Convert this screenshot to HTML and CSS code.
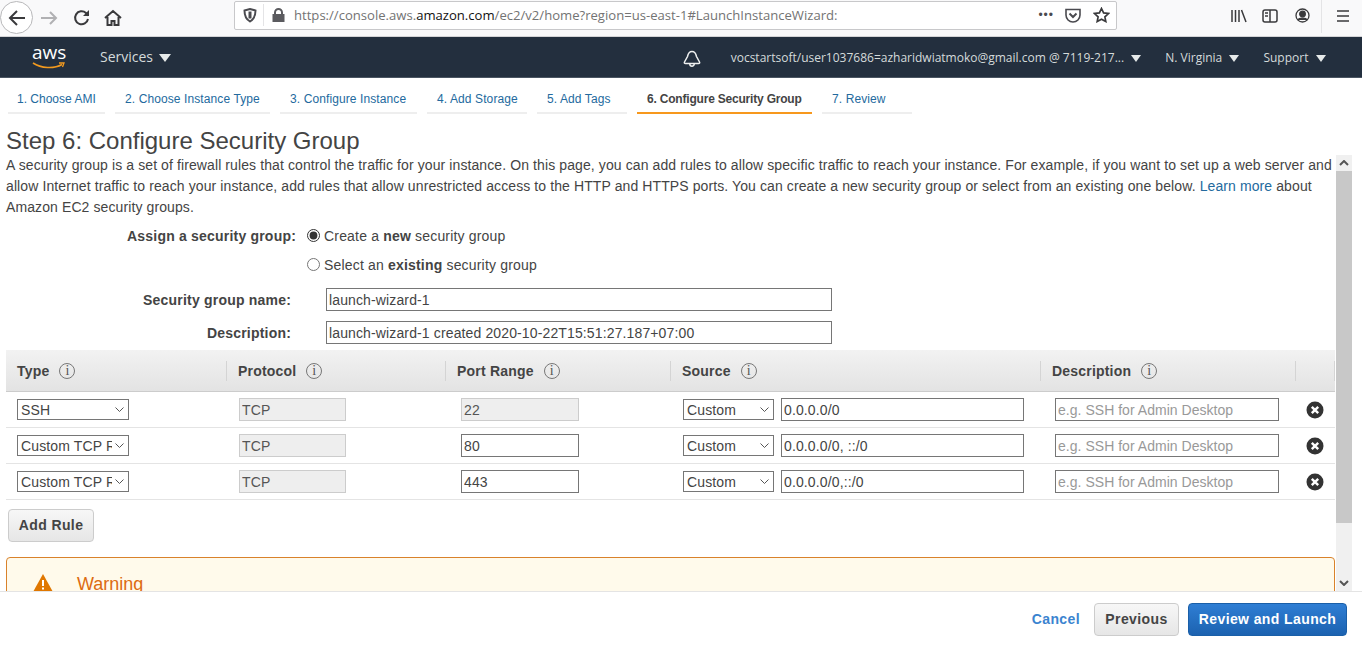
FILE: index.html
```html
<!DOCTYPE html>
<html lang="en">

<head>
    <meta charset="UTF-8">
    <title>EC2 Management Console</title>
    <link rel="stylesheet" href="styles.css">
</head>

<body>

    <!-- Browser toolbar -->
    <div class="browser-bar">
        <div class="back-btn">
            <svg width="20" height="20" viewBox="0 0 20 20" fill="none" stroke="#3a3a3c" stroke-width="2"><path d="M18 10H3M10 3l-7 7 7 7"/></svg>
        </div>
        <svg class="tool-icon forward" width="18" height="18" viewBox="0 0 18 18" fill="none" stroke="#b1b1b3" stroke-width="2"><path d="M1 9h15M10 3l6 6-6 6"/></svg>
        <svg class="tool-icon reload" width="18" height="18" viewBox="0 0 18 18" fill="none" stroke="#3a3a3c" stroke-width="2"><path d="M15 10a6.500 6.500 0 1 1-2-6l2.500 2.500"/><path d="M16 1v6h-6" fill="#3a3a3c" stroke="none"/></svg>
        <svg class="tool-icon home" width="18" height="18" viewBox="0 0 18 18" fill="none" stroke="#3a3a3c" stroke-width="2"><path d="M1 9l8-7 8 7M3.500 8v8h4v-4h3v4h4V8"/></svg>
        <div class="url-box">
            <svg class="shield" width="14" height="15" viewBox="0 0 14 15" fill="none" stroke="#4a4a4f" stroke-width="2"><path d="M1.500 2.500L7 1l5.500 1.500c0 5-1 8.500-5.500 11C2.500 11 1.500 7.500 1.500 2.500z"/><path d="M7 3.500v7" stroke-width="3"/></svg>
            <span class="url-sep"></span>
            <svg class="lock" width="13" height="14" viewBox="0 0 13 14" fill="#5b5b5f"><path d="M2 6V4.500a4.500 4.500 0 0 1 9 0V6h1.500v8H.5V6zm2 0h5V4.500a2.500 2.500 0 0 0-5 0z"/></svg>
            <span class="url-text">https://console.aws.<b>amazon.com</b>/ec2/v2/home?region=us-east-1#LaunchInstanceWizard:</span>
            <span class="url-dots">&bull;&bull;&bull;</span>
            <svg class="pocket" width="16" height="15" viewBox="0 0 16 15" fill="none" stroke="#4a4a4f" stroke-width="1.600"><path d="M1 1.500h14v5.500a7 7 0 0 1-14 0z"/><path d="M4.500 5.500L8 9l3.500-3.500" stroke-width="2"/></svg>
            <svg class="star" width="17" height="16" viewBox="0 0 17 16" fill="none" stroke="#3a3a3c" stroke-width="1.700"><path d="M8.500 1.500l2.100 4.400 4.800.6-3.500 3.300.9 4.700-4.300-2.300-4.300 2.300.9-4.700L1.600 6.500l4.800-.6z"/></svg>
        </div>
        <svg class="tool-icon library" width="16" height="14" viewBox="0 0 16 14" fill="none" stroke="#3a3a3c" stroke-width="1.500"><path d="M1 1v12M4.500 1v12M8 1v12M10.500 1l4.500 12"/></svg>
        <svg class="tool-icon sidebar" width="16" height="14" viewBox="0 0 16 14" fill="none" stroke="#3a3a3c" stroke-width="1.500"><rect x="1" y="1" width="14" height="12" rx="2"/><path d="M8 1v12M3 4h3M3 7h3" /></svg>
        <svg class="tool-icon account" width="15" height="15" viewBox="0 0 15 15" fill="none" stroke="#3a3a3c" stroke-width="1.300"><circle cx="7.500" cy="7.500" r="6.500"/><circle cx="7.500" cy="6" r="2.800" fill="#3a3a3c"/><path d="M3 12c1-2.500 8-2.500 9 0" fill="#3a3a3c"/></svg>
        <span class="toolbar-sep"></span>
        <svg class="tool-icon menu" width="14" height="12" viewBox="0 0 14 12" stroke="#3a3a3c" stroke-width="1.700"><path d="M1 1h12M1 6h12M1 11h12"/></svg>
    </div>

    <!-- AWS header -->
    <div class="aws-header">
        <div class="aws-logo">
            <span class="aws-word">aws</span>
            <svg class="aws-smile" width="34" height="8" viewBox="0 0 34 8" fill="none" stroke="#f29a1f" stroke-width="1.600"><path d="M1 1c8 5.500 21 6 29 1.500"/><path d="M27 1h5l-1.500 4" stroke-width="1.300"/></svg>
        </div>
        <span class="nav-item services">Services <i class="caret"></i></span>
        <svg class="bell" width="18" height="18" viewBox="0 0 18 18" fill="none" stroke="#eef0f0" stroke-width="1.500"><path d="M9 1.500c-3 0-4 2.500-4.500 5L1.500 12c-.5 1 0 1.500 1 1.500h13c1 0 1.500-.5 1-1.500l-3-5.500C13 4 12 1.500 9 1.500z"/><path d="M6.800 14a2.200 2.200 0 0 0 4.400 0"/></svg>
        <span class="nav-item account-name">vocstartsoft/user1037686=azharidwiatmoko@gmail.com @ 7119-217... <i class="caret"></i></span>
        <span class="nav-item region">N. Virginia <i class="caret"></i></span>
        <span class="nav-item support">Support <i class="caret"></i></span>
    </div>

    <!-- Wizard steps -->
    <div class="wizard-tabs">
        <a class="tab">1. Choose AMI</a>
        <a class="tab">2. Choose Instance Type</a>
        <a class="tab">3. Configure Instance</a>
        <a class="tab">4. Add Storage</a>
        <a class="tab">5. Add Tags</a>
        <a class="tab active">6. Configure Security Group</a>
        <a class="tab">7. Review</a>
    </div>

    <h1>Step 6: Configure Security Group</h1>

    <div class="scroll-area">
        <div class="content">
            <p class="intro">A security group is a set of firewall rules that control the traffic for your instance. On this page, you can add rules to allow specific traffic to reach your instance. For example, if you want to set up a web server and allow Internet traffic to reach your instance, add rules that allow unrestricted access to the HTTP and HTTPS ports. You can create a new security group or select from an existing one below. <a class="link">Learn more</a> about Amazon EC2 security groups.</p>

            <div class="assign-row">
                <span class="form-label">Assign a security group:</span>
                <div class="radio-list">
                    <label class="radio-line"><input type="radio" name="sg" checked> <span>Create a <b>new</b> security group</span></label>
                    <label class="radio-line"><input type="radio" name="sg"> <span>Select an <b>existing</b> security group</span></label>
                </div>
            </div>

            <div class="field-row">
                <span class="form-label">Security group name:</span>
                <input class="text-input wide" type="text" value="launch-wizard-1">
            </div>
            <div class="field-row second">
                <span class="form-label">Description:</span>
                <input class="text-input wide" type="text" value="launch-wizard-1 created 2020-10-22T15:51:27.187+07:00">
            </div>

            <table class="rules">
                <colgroup>
                    <col class="col-type"><col class="col-protocol"><col class="col-port"><col class="col-source"><col class="col-desc"><col class="col-del">
                </colgroup>
                <thead>
                    <tr>
                        <th><span class="th-inner">Type <i class="info">i</i></span></th>
                        <th><span class="th-inner">Protocol <i class="info">i</i></span></th>
                        <th><span class="th-inner">Port Range <i class="info">i</i></span></th>
                        <th><span class="th-inner">Source <i class="info">i</i></span></th>
                        <th><span class="th-inner">Description <i class="info">i</i></span></th>
                        <th><span class="th-inner">&nbsp;</span></th>
                    </tr>
                </thead>
                <tbody>
                    <tr>
                        <td class="type-cell"><select class="sel sel-type"><option>SSH</option></select></td>
                        <td class="proto-cell"><input class="text-input proto" type="text" value="TCP" disabled></td>
                        <td class="port-cell"><input class="text-input port" type="text" value="22" disabled></td>
                        <td class="source-cell"><select class="sel sel-source"><option>Custom</option></select><input class="text-input cidr" type="text" value="0.0.0.0/0"></td>
                        <td class="desc-cell"><input class="text-input desc" type="text" placeholder="e.g. SSH for Admin Desktop"></td>
                        <td class="del-cell"><svg class="del" width="18" height="18" viewBox="0 0 18 18"><circle cx="9" cy="9" r="8.500" fill="#333"/><path d="M5.800 5.800l6.400 6.400M12.200 5.800l-6.400 6.400" stroke="#fff" stroke-width="2.400"/></svg></td>
                    </tr>
                    <tr>
                        <td class="type-cell"><select class="sel sel-type"><option>Custom TCP Rule</option></select></td>
                        <td class="proto-cell"><input class="text-input proto" type="text" value="TCP" disabled></td>
                        <td class="port-cell"><input class="text-input port" type="text" value="80"></td>
                        <td class="source-cell"><select class="sel sel-source"><option>Custom</option></select><input class="text-input cidr" type="text" value="0.0.0.0/0, ::/0"></td>
                        <td class="desc-cell"><input class="text-input desc" type="text" placeholder="e.g. SSH for Admin Desktop"></td>
                        <td class="del-cell"><svg class="del" width="18" height="18" viewBox="0 0 18 18"><circle cx="9" cy="9" r="8.500" fill="#333"/><path d="M5.800 5.800l6.400 6.400M12.200 5.800l-6.400 6.400" stroke="#fff" stroke-width="2.400"/></svg></td>
                    </tr>
                    <tr>
                        <td class="type-cell"><select class="sel sel-type"><option>Custom TCP Rule</option></select></td>
                        <td class="proto-cell"><input class="text-input proto" type="text" value="TCP" disabled></td>
                        <td class="port-cell"><input class="text-input port" type="text" value="443"></td>
                        <td class="source-cell"><select class="sel sel-source"><option>Custom</option></select><input class="text-input cidr" type="text" value="0.0.0.0/0,::/0"></td>
                        <td class="desc-cell"><input class="text-input desc" type="text" placeholder="e.g. SSH for Admin Desktop"></td>
                        <td class="del-cell"><svg class="del" width="18" height="18" viewBox="0 0 18 18"><circle cx="9" cy="9" r="8.500" fill="#333"/><path d="M5.800 5.800l6.400 6.400M12.200 5.800l-6.400 6.400" stroke="#fff" stroke-width="2.400"/></svg></td>
                    </tr>
                </tbody>
            </table>

            <button class="btn add-rule">Add Rule</button>

            <div class="warning">
                <svg class="warn-icon" width="20" height="18" viewBox="0 0 20 18"><path d="M10 0l10 18H0z" fill="#e07700"/><path d="M10 6v6M10 13.500v2" stroke="#fff" stroke-width="2"/></svg>
                <span class="warn-title">Warning</span>
            </div>
        </div>

        <div class="scrollbar">
            <svg class="arrow" width="10" height="6" viewBox="0 0 10 6" fill="none" stroke="#555" stroke-width="2"><path d="M1 5l4-4 4 4"/></svg>
            <div class="thumb"></div>
            <svg class="arrow" width="10" height="6" viewBox="0 0 10 6" fill="none" stroke="#555" stroke-width="2"><path d="M1 1l4 4 4-4"/></svg>
        </div>
    </div>

    <!-- Footer actions -->
    <div class="footer">
        <a class="cancel">Cancel</a>
        <button class="btn previous">Previous</button>
        <button class="btn primary">Review and Launch</button>
    </div>

</body>

</html>
```

FILE: styles.css
```css
/* Global Reset */
* {
    margin: 0;
    padding: 0;
    box-sizing: border-box;
}

/* Body */
body {
    font-family: 'Liberation Sans', Arial, sans-serif;
    background-color: #fff;
    color: #444;
    width: 1362px;
    height: 656px;
    overflow: hidden;
    display: flex;
    flex-direction: column;
}

/* Browser toolbar */
.browser-bar {
    height: 37px;
    background: #f9f9fa;
    border-bottom: 1px solid #d4d4d6;
    display: flex;
    align-items: center;
    flex: none;
}

.back-btn {
    width: 33px;
    height: 33px;
    border: 1px solid #b8b8ba;
    border-radius: 50%;
    background: #fff;
    display: flex;
    align-items: center;
    justify-content: center;
    margin-top: -1px;
}

.tool-icon {
    flex: none;
}

.forward { margin-left: 7px; }
.reload { margin-left: 15px; }
.home { margin-left: 13px; }

.url-box {
    margin-left: 112px;
    margin-top: -6px;
    width: 883px;
    height: 29px;
    background: #fff;
    border: 1px solid #c8c8ca;
    border-radius: 2px;
    display: flex;
    align-items: center;
}

.shield { margin-left: 8px; }

.url-sep {
    width: 1px;
    height: 22px;
    background: #e4e4e6;
    margin-left: 6px;
}

.lock { margin-left: 8px; }

.url-text {
    font-family: 'Open Sans', sans-serif;
    font-size: 13.100px;
    color: #737373;
    margin-left: 9px;
    white-space: nowrap;
    flex: 1;
}

.url-text b {
    font-weight: 400;
    color: #111;
}

.url-dots {
    font-size: 12px;
    color: #4a4a4f;
    letter-spacing: 1px;
}

.pocket { margin-left: 11px; }
.star { margin-left: 12px; margin-right: 6px; }

.library { margin-left: 114px; margin-top: -5px; }
.sidebar { margin-left: 15px; margin-top: -5px; }
.account { margin-left: 17px; margin-top: -5px; }

.toolbar-sep {
    width: 1px;
    height: 33px;
    background: #e4e4e6;
    margin-left: 11px;
    margin-top: -4px;
}

.menu { margin-left: 14px; margin-top: -5px; }

/* AWS header */
.aws-header {
    height: 41px;
    background: #232f3e;
    border-bottom: 1px solid #4a5562;
    display: flex;
    align-items: center;
    font-family: 'Open Sans', sans-serif;
    color: #d5dbdb;
    flex: none;
}

.aws-logo {
    width: 34px;
    margin-left: 32px;
    height: 30px;
}

.aws-word {
    display: block;
    font-family: 'Open Sans', sans-serif;
    font-size: 19px;
    line-height: 20px;
    color: #fff;
    text-align: center;
}

.aws-smile {
    display: block;
}

.nav-item {
    white-space: nowrap;
    font-size: 12px;
}

.services {
    font-size: 14px;
    margin-left: 34px;
    margin-top: -2px;
}

.services .caret {
    margin-left: 2px;
    border-left-width: 6px;
    border-right-width: 6px;
    border-top-width: 8px;
}

.bell { margin-left: 512px; margin-top: 4px; }
.account-name { margin-left: 30px; }
.region { margin-left: 24px; }
.support { margin-left: 24px; }

.caret {
    display: inline-block;
    width: 0;
    height: 0;
    border-left: 5px solid transparent;
    border-right: 5px solid transparent;
    border-top: 7px solid #e6eaea;
    margin-left: 4px;
}

/* Wizard steps */
.wizard-tabs {
    display: grid;
    grid-template-columns: 97px 155px 137px 100px 90px 175px 90px;
    gap: 10px;
    padding-left: 8px;
    height: 37px;
    flex: none;
}

.tab {
    padding-left: 10px;
    height: 36px;
    line-height: 43px;
    font-size: 12px;
    letter-spacing: 0.1px;
    color: #236a9e;
    border-bottom: 2px solid #eee;
    white-space: nowrap;
}

.tab:first-child {
    padding-left: 9px;
    letter-spacing: 0;
}

.tab.active {
    color: #444;
    font-weight: bold;
    letter-spacing: -0.2px;
    border-bottom-color: #f7981d;
}

/* Heading */
h1 {
    font-size: 24px;
    font-weight: normal;
    color: #444;
    margin-left: 6px;
    height: 40px;
    padding-top: 11px;
    line-height: 30px;
    flex: none;
}

/* Scrolling content */
.scroll-area {
    height: 437px;
    display: flex;
    border-bottom: 1px solid #e4e4e4;
    overflow: hidden;
    flex: none;
}

.content {
    width: 1336px;
    padding-left: 6px;
    flex: none;
}

.intro {
    font-size: 14px;
    letter-spacing: 0.1px;
    line-height: 21px;
    color: #444;
    width: 1330px;
}

.link {
    color: #236a9e;
}

.assign-row {
    display: flex;
    margin-top: 8px;
}

.form-label {
    font-size: 14px;
    font-weight: bold;
    color: #444;
    letter-spacing: 0.2px;
    text-align: right;
    white-space: nowrap;
}

.assign-row .form-label {
    width: 290px;
    line-height: 21px;
}

.radio-list {
    margin-left: 11px;
    margin-top: -1px;
}

.radio-line {
    display: flex;
    align-items: center;
    font-size: 14px;
    letter-spacing: 0.18px;
    height: 21px;
    margin-bottom: 8px;
}

.radio-line input {
    width: 13px;
    height: 13px;
    margin-right: 4px;
    accent-color: #333;
}

.field-row {
    display: flex;
    align-items: center;
    margin-top: 5px;
}

.field-row.second {
    margin-top: 10px;
}

.field-row .form-label {
    width: 285px;
}

.text-input {
    height: 23px;
    border: 1px solid #767676;
    font-family: 'Liberation Sans', Arial, sans-serif;
    font-size: 14px;
    letter-spacing: 0.13px;
    color: #444;
    padding: 0 2px;
    background: #fff;
    outline: none;
}

.text-input::placeholder {
    color: #999;
}

.text-input:disabled {
    background: #eee;
    border-color: #ccc;
    color: #555;
}

.wide {
    width: 506px;
    margin-left: 35px;
}

/* Rules table */
.rules {
    border-collapse: collapse;
    table-layout: fixed;
    width: 1329px;
    margin-top: 6px;
}

.col-type { width: 221px; }
.col-protocol { width: 219px; }
.col-port { width: 225px; }
.col-source { width: 370px; }
.col-desc { width: 255px; }
.col-del { width: 39px; }

.rules th {
    height: 41px;
    background: linear-gradient(#f2f2f2, #e3e3e3);
    border-bottom: 1px solid #ccc;
    text-align: left;
    font-size: 14px;
    letter-spacing: 0.2px;
    color: #444;
    padding: 2px 0 0;
}

.th-inner {
    display: flex;
    align-items: center;
    height: 20px;
    padding-left: 11px;
    border-right: 1px solid #d4d4d4;
}

.info {
    display: inline-block;
    width: 16px;
    height: 16px;
    margin-left: 10px;
    border: 1px solid #777;
    border-radius: 50%;
    font-family: 'Liberation Serif', serif;
    font-size: 14px;
    line-height: 14px;
    text-align: center;
    font-style: normal;
    font-weight: normal;
    color: #555;
}

.rules td {
    height: 36px;
    border-bottom: 1px solid #e4e4e4;
    padding: 1px 0 0;
    vertical-align: middle;
}

.rules .type-cell { padding-left: 11px; }
.rules .proto-cell { padding-left: 12px; }
.rules .port-cell { padding-left: 15px; }
.rules .source-cell { padding-left: 12px; }
.rules .desc-cell { padding-left: 14px; }
.rules .del-cell { padding-left: 10px; }

.sel {
    appearance: none;
    height: 21px;
    border: 1px solid #767676;
    border-radius: 0;
    padding: 0 16px 0 3px;
    background: #fff url("data:image/svg+xml,%3Csvg xmlns='http://www.w3.org/2000/svg' width='9' height='5'%3E%3Cpath d='M.5.5l4 4 4-4' fill='none' stroke='%23555'/%3E%3C/svg%3E") no-repeat right 4px center;
    font-family: 'Liberation Sans', Arial, sans-serif;
    font-size: 14px;
    letter-spacing: 0.13px;
    color: #444;
    vertical-align: middle;
}

.sel-type { width: 112px; }
.sel-source { width: 91px; }

.proto { width: 107px; vertical-align: middle; }
.port { width: 118px; vertical-align: middle; }
.cidr { width: 243px; margin-left: 7px; vertical-align: middle; }
.desc { width: 224px; letter-spacing: 0.03px; vertical-align: middle; }

.del {
    display: block;
}

/* Buttons */
.btn {
    font-family: 'Liberation Sans', Arial, sans-serif;
    font-size: 14px;
    font-weight: bold;
    letter-spacing: 0.4px;
    color: #444;
    height: 33px;
    border: 1px solid #ccc;
    border-radius: 4px;
    background: linear-gradient(#f7f7f7, #e6e6e6);
    cursor: pointer;
}

.add-rule {
    width: 86px;
    margin: 9px 0 0 2px;
    display: block;
}

/* Warning box */
.warning {
    margin-top: 15px;
    width: 1329px;
    height: 80px;
    background: #fffaeb;
    border: 1px solid #d9822b;
    border-radius: 4px;
    display: flex;
    align-items: flex-start;
    padding: 16px 0 0 26px;
}

.warn-title {
    font-size: 18px;
    line-height: 18px;
    color: #dd6b10;
    margin-left: 24px;
    margin-top: 1px;
}

/* Scrollbar */
.scrollbar {
    width: 16px;
    background: #f0f0f0;
    display: flex;
    flex-direction: column;
    align-items: center;
    flex: none;
}

.arrow {
    margin: 5px 0;
    flex: none;
}

.thumb {
    width: 16px;
    height: 352px;
    background: #c8c8c8;
    margin-bottom: auto;
}

/* Footer */
.footer {
    flex: 1;
    display: flex;
    align-items: center;
    justify-content: flex-end;
    padding: 0 15px 10px 0;
}

.cancel {
    font-size: 14px;
    font-weight: bold;
    letter-spacing: 0.4px;
    color: #3b84d0;
    margin-right: 14px;
}

.previous {
    width: 85px;
    margin-right: 9px;
}

.primary {
    width: 159px;
    color: #fff;
    border-color: #1a5fa8;
    background: linear-gradient(#2f7ed4, #1c62b0);
}
```
